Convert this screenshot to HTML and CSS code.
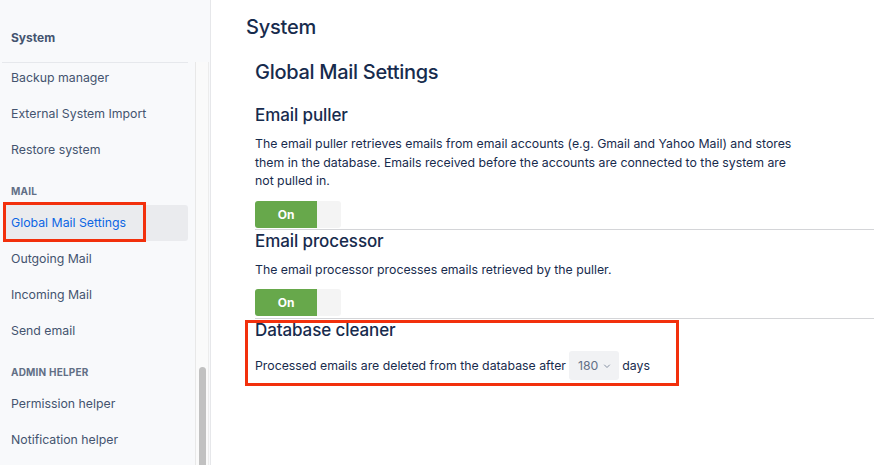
FILE: index.html
```html
<!DOCTYPE html>
<html lang="en">
<head>
<meta charset="utf-8">
<title>Global Mail Settings</title>
<link rel="stylesheet" href="styles.css">
</head>
<body>
<div class="app">
  <aside class="sidebar">
    <div class="side-head">System</div>
    <div class="side-body">
      <div class="side-scroll">
        <div class="side-rule"></div>
        <nav class="side-list">
          <a class="item">Backup manager</a>
          <a class="item">External System Import</a>
          <a class="item">Restore system</a>
          <div class="group">Mail</div>
          <a class="item selected">Global Mail Settings<span class="mark mark-nav"></span></a>
          <a class="item">Outgoing Mail</a>
          <a class="item">Incoming Mail</a>
          <a class="item">Send email</a>
          <div class="group">Admin helper</div>
          <a class="item">Permission helper</a>
          <a class="item">Notification helper</a>
        </nav>
      </div>
      <div class="scrollbar"><div class="thumb"></div></div>
    </div>
  </aside>
  <main class="main">
    <h1 class="page-title">System</h1>
    <div class="content">
      <h2 class="section-title">Global Mail Settings</h2>
      <section class="block">
        <h3 class="block-title">Email puller</h3>
        <p class="desc">The email puller retrieves emails from email accounts (e.g. Gmail and Yahoo Mail) and stores them in the database. Emails received before the accounts are connected to the system are not pulled in.</p>
        <div class="toggle"><span class="toggle-on">On</span><span class="toggle-off"></span></div>
      </section>
      <section class="block">
        <h3 class="block-title">Email processor</h3>
        <p class="desc">The email processor processes emails retrieved by the puller.</p>
        <div class="toggle"><span class="toggle-on">On</span><span class="toggle-off"></span></div>
      </section>
      <section class="block last">
        <h3 class="block-title">Database cleaner</h3>
        <div class="cleaner-row">
          <span>Processed emails are deleted from the database after</span>
          <span class="select">180<svg class="chev" width="8" height="8" viewBox="0 0 8 8"><path d="M1.5 3 L4 5.5 L6.5 3" fill="none" stroke="#8590a2" stroke-width="1" stroke-linecap="round" stroke-linejoin="round"/></svg></span>
          <span>days</span>
        </div>
        <span class="mark mark-db"></span>
      </section>
    </div>
  </main>
</div>
</body>
</html>
```
FILE: styles.css
```css
* { box-sizing: border-box; }
html, body { margin: 0; padding: 0; }
body {
  font-family: Inter, "Noto Sans", "Liberation Sans", sans-serif;
  color: #172b4d;
  background: #ffffff;
  width: 874px;
  height: 465px;
  overflow: hidden;
}
.app {
  display: flex;
  height: 465px;
}
.sidebar {
  width: 211px;
  flex: none;
  background: #f8f9fb;
  border-right: 1px solid #e6e7ea;
  display: flex;
  flex-direction: column;
}
.side-head {
  height: 62px;
  padding: 30px 0 0 11px;
  font-size: 12px;
  line-height: 16px;
  font-weight: 700;
  color: #44546f;
}
.side-body {
  flex: 1;
  display: flex;
  min-height: 0;
}
.side-scroll {
  width: 195px;
  flex: none;
  overflow: hidden;
}
.side-rule {
  height: 1px;
  margin: 0 7px 0 2px;
  background: #e6e8ec;
  position: relative;
  z-index: 1;
}
.side-list {
  margin-top: -3px;
  display: flex;
  flex-direction: column;
}
.item {
  position: relative;
  display: block;
  height: 36px;
  line-height: 36px;
  margin: 0 7px 0 3px;
  padding-left: 8px;
  font-size: 12.3px;
  color: #44546f;
  border-radius: 3px;
  white-space: nowrap;
}
.item.selected {
  background: #eaebee;
  color: #0c66e4;
}
.group {
  height: 37px;
  padding: 16px 0 0 11px;
  line-height: 14px;
  font-size: 10px;
  font-weight: 700;
  letter-spacing: 0.2px;
  text-transform: uppercase;
  color: #626f86;
}
.scrollbar {
  width: 14px;
  flex: none;
  background: #fafafa;
  border-left: 1px solid #e8e8e8;
  border-right: 1px solid #ececec;
  display: flex;
  flex-direction: column;
  padding: 305px 2px 0 3px;
}
.thumb {
  flex: 1;
  background: #c1c1c1;
  border-radius: 4px 4px 0 0;
}
.mark {
  position: absolute;
  border: 3px solid #f2300c;
  pointer-events: none;
}
.mark-nav {
  left: 0;
  top: -3px;
  width: 143px;
  height: 40px;
}
.main {
  flex: 1;
  padding: 15px 0 0 35px;
  min-width: 0;
}
.page-title {
  margin: 0;
  font-size: 20px;
  line-height: 24px;
  font-weight: 500;
  color: #172b4d;
  letter-spacing: -0.2px;
}
.content {
  padding-left: 9px;
}
.section-title {
  margin: 21px 0 0 0;
  font-size: 20px;
  line-height: 24px;
  font-weight: 500;
  color: #172b4d;
  letter-spacing: -0.3px;
}
.block {
  border-bottom: 1px solid #d4d5d8;
  padding-bottom: 1px;
  position: relative;
}
.block:first-of-type {
  margin-top: 21px;
}
.block:nth-of-type(2) {
  padding-bottom: 2px;
}
.block.last {
  border-bottom: none;
}
.block-title {
  margin: 1px 0 10px 0;
  font-size: 17px;
  line-height: 20px;
  font-weight: 500;
  color: #172b4d;
  letter-spacing: -0.1px;
}
.block:first-of-type .block-title {
  margin-top: 0;
}
.desc {
  margin: 0 0 10px 0;
  max-width: 542px;
  font-size: 12.3px;
  line-height: 18.5px;
  color: #172b4d;
}
.toggle {
  display: flex;
  width: 86px;
  height: 27px;
}
.toggle-on {
  width: 62px;
  background: #67a84b;
  color: #ffffff;
  font-size: 12px;
  font-weight: 700;
  display: flex;
  align-items: center;
  justify-content: center;
  border-radius: 3px 0 0 3px;
}
.toggle-off {
  width: 24px;
  background: #f4f4f4;
  border-radius: 0 3px 3px 0;
}
.cleaner-row {
  display: flex;
  align-items: center;
  gap: 8px;
  font-size: 12.3px;
  color: #172b4d;
  margin-top: 11px;
}
.select {
  display: inline-flex;
  align-items: center;
  gap: 5px;
  height: 29px;
  padding: 0 8px 0 9px;
  margin-left: -5px;
  margin-right: -5px;
  background: #f1f2f4;
  border-radius: 3px;
  color: #626f86;
}
.chev { display: block; }
.mark-db {
  left: -10px;
  top: 0;
  width: 434px;
  height: 66px;
}
```
